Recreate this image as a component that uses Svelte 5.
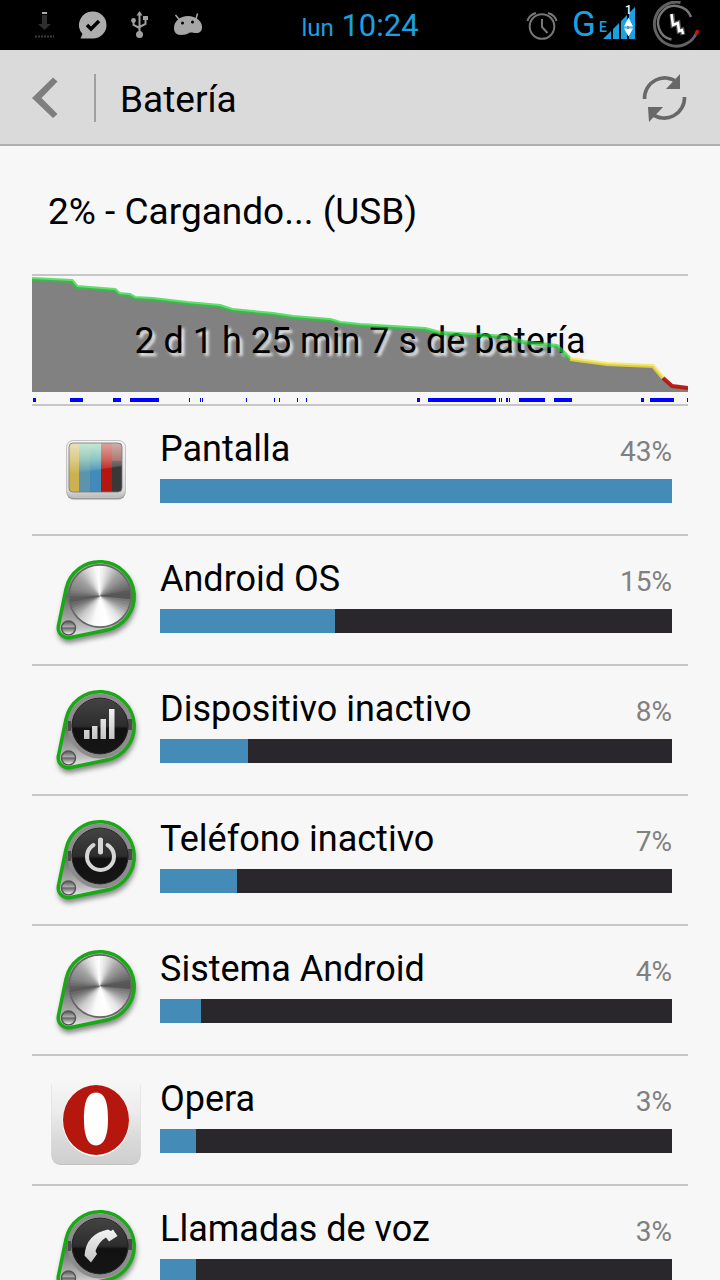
<script>
  const items = [
    { name: 'Pantalla', percent: 43, icon: 'screen', fill: 100 },
    { name: 'Android OS', percent: 15, icon: 'metal', fill: 34.2 },
    { name: 'Dispositivo inactivo', percent: 8, icon: 'signal', fill: 17.2 },
    { name: 'Teléfono inactivo', percent: 7, icon: 'power', fill: 15 },
    { name: 'Sistema Android', percent: 4, icon: 'metal', fill: 8 },
    { name: 'Opera', percent: 3, icon: 'opera', fill: 7 },
    { name: 'Llamadas de voz', percent: 3, icon: 'phone', fill: 7 }
  ];

  const green = '0,3 40,5 45,11 83,14 87,18 98,19 103,22 121,23 155,27 188,30 200,34 241,38 261,41 298,44 308,47 328,49 393,53 408,57 445,59 475,61 491,66 525,70 538,83';
  const yellow = '538,83 575,88 621,90 631,102';
  const red = '631,102 640,110 656,112';

  // Awake periods: [start, width]
  const awake = [
    [1, 3], [38, 13], [81, 8], [98, 29], [157, 1], [168, 1], [170, 1], [214, 1], [242, 1], [247, 1],
    [265, 1], [274, 1], [385, 3], [396, 68], [467, 1], [469, 1], [474, 2], [477, 1], [487, 26],
    [522, 18], [609, 3], [618, 24], [655, 1]
  ];

  // Brushed metal: the shade of each wedge depends on its angle
  const stops = [[0, 105], [20, 150], [45, 225], [70, 255], [100, 250], [130, 200], [155, 120], [170, 85], [190, 130], [220, 165], [245, 225], [262, 255], [280, 225], [305, 165], [340, 110], [352, 80], [361, 105]];
  function shade(a) {
    const i = stops.findIndex((s) => s[0] > a);
    const [a0, v0] = stops[i - 1];
    const [a1, v1] = stops[i];
    return Math.round(v0 + ((v1 - v0) * (a - a0)) / (a1 - a0));
  }
  const wedges = Array.from({ length: 60 }, (_, i) => {
    const a = i * 6;
    const p = (d) => `${(52 + 31 * Math.cos((d * Math.PI) / 180)).toFixed(2)} ${(44 + 31 * Math.sin((d * Math.PI) / 180)).toFixed(2)}`;
    const v = shade(a);
    return { d: `M52 44L${p(a)}L${p(a + 12)}Z`, fill: `rgb(${v},${v},${v})` };
  });
</script>

<svelte:head><title>Batería</title></svelte:head>

<div class="screen">
  <div class="status">
    <div class="notes">
      <svg width="20" height="28" viewBox="0 0 20 28" aria-hidden="true">
        <path d="M7 1h5v2H7z" fill="#aaa" />
        <path d="M7 4h5v9h4l-6.500 6L3 13h4z" fill="#2e2e2e" />
        <path d="M0 25.500h19" stroke="#3c3c3c" stroke-width="2" stroke-dasharray="2 1" />
      </svg>
      <svg width="28" height="28" viewBox="0 0 28 28" aria-hidden="true">
        <path d="M14 0.500a13.500 13.500 0 1 1 0 27H1.500l2-4.500A13.500 13.500 0 0 1 14 .5z" fill="#adadad" />
        <path d="M8 14l4 4 8-8" fill="none" stroke="#000" stroke-width="3.500" />
      </svg>
      <svg width="18" height="28" viewBox="0 0 18 28" aria-hidden="true">
        <g fill="none" stroke="#a0a0a0" stroke-width="2">
          <path d="M8.500 3v20M8.500 17L2.500 14V10M8.500 16l6-3V8" />
        </g>
        <path d="M8.500 0l3 4.500h-6zM12 5h5v4h-5z" fill="#a0a0a0" />
        <circle cx="2.500" cy="9.500" r="2.400" fill="#a0a0a0" />
        <circle cx="8.500" cy="23.500" r="3.500" fill="#a0a0a0" />
      </svg>
      <svg width="30" height="24" viewBox="0 0 30 24" aria-hidden="true">
        <path d="M2.500 2l4 5M24.500 0.500L23 6" stroke="#a6a6a6" stroke-width="1.500" />
        <path d="M1 15C1 8 7 3 15 3s14 5 14 11c0 4-2 6-6 6-3 0-5-1-7 0s-4 2-8 2c-5 0-7-3-7-7z" fill="#a6a6a6" />
        <circle cx="9.500" cy="10" r="1.500" /><circle cx="19.500" cy="9" r="1.500" />
      </svg>
    </div>
    <div class="clock"><span>lun</span> 10:24</div>
    <div class="radios">
      <svg width="32" height="32" viewBox="0 0 32 32" fill="none" stroke="#777" stroke-width="2" aria-hidden="true">
        <circle cx="16" cy="17.500" r="12.300" />
        <path d="M16 10v8l5.500 6" />
        <path d="M1.500 12Q3 6 10 4M30.500 12Q29 6 22 4" />
      </svg>
      <svg class="signal" width="64" height="36" viewBox="0 3 64 36" fill="#1ba1e2" aria-label="Señal">
        <text x="-1" y="32" font-size="35">G</text>
        <text x="26" y="28" font-size="14" font-weight="500">E</text>
        <path d="M30 35l8-8v8zM40 35V25l6-6v16zM48 35V17l6-6v24zM56 35V9l6-6v32z" />
        <path d="M51 22.500l4.500-9 4.500 9zM51 24.500h9l-4.500 8z" fill="#fff" />
        <path d="M51.500 23.500h8" stroke="#7fd07f" stroke-width=".8" />
        <text x="52" y="10" font-size="12" font-weight="500" fill="#fff">1</text>
      </svg>
      <svg width="48" height="48" viewBox="0 1 48 48" fill="none" aria-hidden="true">
        <path d="M28.500 2.500A22 22 0 1 0 44.500 33" stroke="#626262" stroke-width="3" />
        <path d="M39 17A17 17 0 1 0 19.500 39.500" stroke="#777" stroke-width="2.500" />
        <path d="M43.500 32.500l1-2 2 .5-.5 2-2 1z" fill="#c8140a" stroke="#c8140a" stroke-width="1.500" />
        <path d="M20 14l1 11 5-2 1 8 3-1 1 5" stroke="#555" stroke-width="5" />
        <path d="M19.500 14l1.500 11 5-2 1 8 3-1 1 4" stroke="#fff" stroke-width="2.500" />
      </svg>
    </div>
  </div>

  <header>
    <button class="back" aria-label="Atrás">
      <svg width="26" height="42" viewBox="0 0 26 42"><path d="M0 21L21 0.500l4.500 4L9.500 21l16 16-4.500 4z" fill="#7e7e7e" /></svg>
    </button>
    <h1>Batería</h1>
    <button class="refresh" aria-label="Actualizar">
      <svg width="46" height="50" viewBox="0 0 46 50">
        <g fill="none" stroke="#686868" stroke-width="3.600">
          <path d="M2.500 26A20.300 20.300 0 0 1 35 9" />
          <path d="M42.500 24A20.300 20.300 0 0 1 10 41" />
        </g>
        <path d="M38 1v15H24zM6 34h15L7 49z" fill="#686868" />
      </svg>
    </button>
  </header>

  <main>
    <h2>2% - Cargando... (USB)</h2>

    <section class="chart">
      <svg viewBox="0 0 656 128" preserveAspectRatio="none" aria-hidden="true">
        <polygon points="{green} {yellow} {red} 656,116 0,116" fill="#818181" />
        {#each awake as [x, w]}
          <rect {x} y="122" width={w} height="4" fill="#00f" />
        {/each}
      </svg>
      <p>2 d 1 h 25 min 7 s de batería</p>
      <svg viewBox="0 0 656 128" preserveAspectRatio="none" fill="none" stroke-width="4" stroke-linejoin="round" aria-hidden="true">
        <polyline points={green} stroke="rgb(30,208,50)" stroke-opacity=".68" />
        <polyline points={yellow} stroke="rgb(250,228,60)" stroke-opacity=".75" />
        <polyline points={red} stroke="rgb(184,20,12)" stroke-opacity=".95" />
      </svg>
    </section>

    <ul>
      {#each items as item, i}
        <li>
          <svg class="icon" width="96" height="96" viewBox="0 0 96 96" aria-hidden="true">
            {#if item.icon === 'screen'}
              <defs>
                <linearGradient id="frame" x2="0" y2="1"><stop offset="0" stop-color="#f4f4f4" /><stop offset=".85" stop-color="#ddd" /><stop offset="1" stop-color="#bbb" /></linearGradient>
                <linearGradient id="gloss" x2="0" y2="1"><stop offset="0" stop-color="#fff" stop-opacity=".6" /><stop offset=".5" stop-color="#fff" stop-opacity=".35" /><stop offset="1" stop-color="#fff" stop-opacity="0" /></linearGradient>
                <linearGradient id="mint" x2="0" y2="1"><stop offset="0" stop-color="#78d48a" stop-opacity=".8" /><stop offset="1" stop-color="#78d48a" stop-opacity="0" /></linearGradient>
                <clipPath id="glass"><rect x="21" y="21" width="53" height="49" rx="4" /></clipPath>
              </defs>
              <rect x="18.500" y="18.500" width="59" height="59" rx="7" fill="#999" />
              <rect x="18.500" y="18.500" width="59" height="57" rx="7" fill="url(#frame)" stroke="#c4c4c4" />
              <g clip-path="url(#glass)">
                <path d="M21 21h10v49H21z" fill="#ccb24e" />
                <path d="M31 21h11v49H31z" fill="#5c93ad" />
                <path d="M42 21h11v49H42z" fill="#408bba" />
                <path d="M53 21h11v49H53z" fill="#b5170e" />
                <path d="M64 21h10v49H64z" fill="#383838" />
                <path d="M31 21h22v30H31z" fill="url(#mint)" />
                <path d="M64 21h10v18H64z" fill="#b5402e" opacity=".6" />
                <path d="M21 21h53v23L21 52z" fill="url(#gloss)" />
              </g>
              <rect x="21" y="21" width="53" height="49" rx="4" fill="none" stroke="#777" stroke-width=".8" />
            {:else if item.icon === 'opera'}
              <defs>
                <linearGradient id="tile" x2="0" y2="1"><stop offset="0" stop-color="#f8f8f8" /><stop offset=".4" stop-color="#ececec" /><stop offset=".75" stop-color="#d8d8d8" /><stop offset="1" stop-color="#cfcfcf" /></linearGradient>
              </defs>
              <rect x="3.500" y="5" width="89" height="88" rx="9" fill="#c4c4c4" />
              <rect x="3.500" y="4" width="89" height="88" rx="9" fill="url(#tile)" />
              <ellipse cx="48" cy="49" rx="33.500" ry="35.500" fill="#fff" />
              <path fill-rule="evenodd" d="M48 13A33 35 0 0 1 48 83A33 35 0 0 1 48 13zM48 20.500C37 20.500 36 36 36 47.500S38 73.500 48 73.500 60 59 60 47.500 59 20.500 48 20.500z" fill="#b5170e" />
            {:else}
              <defs>
                <filter id="soft{i}" x="-20%" y="-20%" width="140%" height="140%"><feGaussianBlur stdDeviation="2.500" /></filter>
                <linearGradient id="shell{i}" x2="0" y2="1"><stop offset="0" stop-color="#ccc" /><stop offset=".45" stop-color="#666" /><stop offset=".85" stop-color="#bbb" /><stop offset="1" stop-color="#eee" /></linearGradient>
                <linearGradient id="face{i}" x2="0" y2="1"><stop offset="0" stop-color="#444" /><stop offset=".5" stop-color="#2d2d2f" /><stop offset=".55" stop-color="#111" /><stop offset="1" stop-color="#161616" /></linearGradient>
                <linearGradient id="knob{i}" x2="0" y2="1"><stop offset="0" stop-color="#555" /><stop offset=".4" stop-color="#aaa" /><stop offset=".5" stop-color="#666" /><stop offset="1" stop-color="#fff" /></linearGradient>
                <linearGradient id="mark{i}" x2="0" y2="1"><stop offset="0" stop-color="#f4f4f4" /><stop offset="1" stop-color="#c4c4c4" /></linearGradient>
              </defs>
              <path transform="translate(1 4)" d="M18 37A34.500 34.500 0 1 1 59 78L22.500 85.500A10 10 0 0 1 10.500 73.500Z" fill="#555" stroke="#777" stroke-width="3" opacity=".75" filter="url(#soft{i})" />
              <path d="M18 37A34.500 34.500 0 1 1 59 78L22.500 85.500A10 10 0 0 1 10.500 73.500Z" fill="url(#shell{i})" stroke="#18aa14" stroke-width="3.500" />
              {#if item.icon === 'metal'}
                <circle cx="52" cy="44" r="32" fill="#777" />
                {#each wedges as w}<path d={w.d} fill={w.fill} />{/each}
                <circle cx="52" cy="44" r="31" fill="none" stroke="#666" stroke-width="1.500" />
              {:else}
                <circle cx="52" cy="44" r="30.500" fill="none" stroke="#8c8c8c" stroke-width="4" />
                <path d="M80 37h4v11h-4zM20 39h3v10h-3z" fill="#222" opacity=".6" />
                <circle cx="52" cy="44" r="28" fill="url(#face{i})" stroke="#222" />
              {/if}
              <circle cx="20.500" cy="76" r="7" fill="url(#knob{i})" stroke="#555" stroke-width="1.500" />
              {#if item.icon === 'signal'}
                <path d="M36 48h5.500v9H36zM44 44h5.500v13H44zM52.500 37H58v20h-5.500zM61 27h5.500v30H61z" fill="url(#mark{i})" />
              {:else if item.icon === 'power'}
                <path d="M45.500 33A13.500 13.500 0 1 0 59.500 33" fill="none" stroke="#d6d6d6" stroke-width="4" stroke-linecap="round" />
                <path d="M52.500 28v12" stroke="#d6d6d6" stroke-width="5" stroke-linecap="round" />
              {:else if item.icon === 'phone'}
                <path d="M60 27.500l3 1.500 2-1.500 4.500 6.500-8.500 5.500-3-4q-7 4-10.500 13.500l1.500 3-6 8.500-6.500-7Q38 32 60 27.500z" fill="url(#mark{i})" />
              {/if}
            {/if}
          </svg>
          <div class="usage">
            <div class="line"><span id="app{i}">{item.name}</span><span class="pct">{item.percent}%</span></div>
            <div class="bar" role="meter" aria-labelledby="app{i}" aria-valuenow={item.percent} aria-valuemin="0" aria-valuemax="100"><div style="width: {item.fill}%"></div></div>
          </div>
        </li>
      {/each}
    </ul>
  </main>
</div>

<style>
  .screen {
    height: 100vh;
    display: flex;
    flex-direction: column;
    overflow: hidden;
    background: #f7f7f7;
    color: #000;
    font: 36px/42px Roboto, sans-serif;
  }
  svg { display: block; flex: none; }
  button { border: 0; padding: 0; background: none; cursor: pointer; }
  h1, h2, p, ul { margin: 0; padding: 0; font: inherit; }
  h1, h2 { font-size: 37px; }
  .status {
    flex: none;
    display: grid;
    grid-template-columns: 1fr auto 1fr;
    align-items: center;
    height: 50px;
    background: #000;
    color: #1ba1e2;
  }
  .notes { display: flex; align-items: center; gap: 24px; padding-left: 35px; }
  .clock { font-size: 31px; white-space: nowrap; padding-top: 4px; }
  .clock span { font-size: 24px; }
  .radios { display: flex; align-items: center; justify-content: flex-end; gap: 15px; padding-right: 20px; }
  .signal { overflow: visible; }
  header {
    flex: none;
    display: flex;
    align-items: center;
    box-sizing: border-box;
    height: 96px;
    padding: 2px 32px 0;
    background: #dadada;
    border-bottom: 2px solid #b0b0b0;
  }
  .back { padding: 3px 36px 3px 0; border-right: 2px solid #a0a0a0; }
  h1 { flex: 1; padding: 4px 0 0 24px; }
  main { flex: 1; min-height: 0; overflow: hidden; padding: 0 32px; }
  h2 { padding: 45px 16px 41px; }
  .chart {
    display: grid;
    border: solid #c6c6c6;
    border-width: 2px 0;
  }
  .chart > * { grid-area: 1 / 1; }
  .chart svg { width: 100%; height: 128px; }
  .chart p { padding-top: 44px; text-align: center; text-shadow: 3px 3px 3px #eee; }
  ul { list-style: none; }
  li {
    display: flex;
    box-sizing: border-box;
    height: 130px;
    padding: 0 16px;
    border-bottom: 2px solid #c6c6c6;
  }
  .icon { margin: 16px 16px 0 0; }
  .usage { flex: 1; padding-top: 22px; }
  .line { display: flex; align-items: baseline; justify-content: space-between; }
  .pct { font-size: 28px; color: #808080; }
  .bar { height: 24px; margin-top: 6px; background: #29262c; }
  .bar div { height: 100%; background: #458bb8; }
</style>
